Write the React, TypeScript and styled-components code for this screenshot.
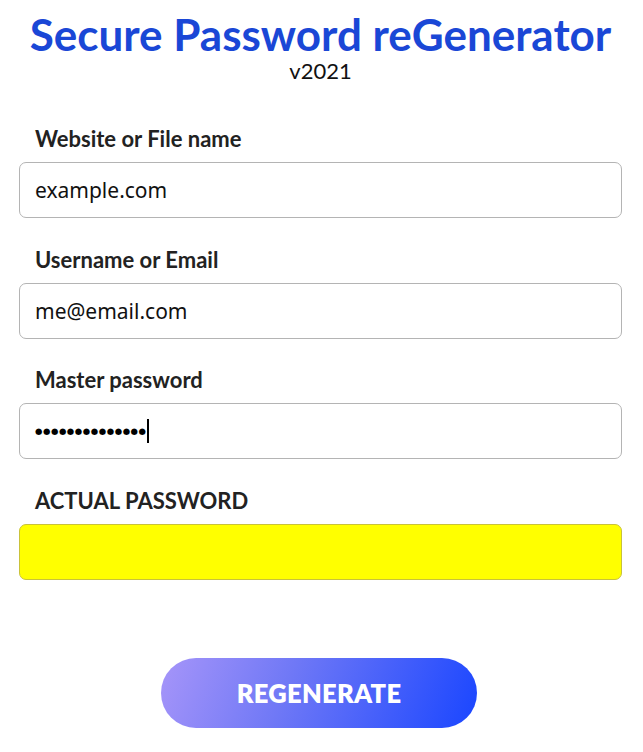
import React from "react";
import styled, { createGlobalStyle } from "styled-components";

const Global = createGlobalStyle`
  html, body { margin: 0; padding: 0; background: #fff; }
  body { font-family: Lato, "Noto Sans", sans-serif; color: #222; }
`;

const Page = styled.div`
  width: 643px;
  padding: 0 21px 0 19px;
  box-sizing: border-box;
  display: flex;
  flex-direction: column;
`;

const Header = styled.header`
  display: flex;
  flex-direction: column;
  align-items: center;
  padding-top: 12px;
`;

const Title = styled.h1`
  margin: 0;
  font-family: Lato, sans-serif;
  font-weight: 700;
  font-size: 44px;
  line-height: 44px;
  color: #1a47d6;
  white-space: nowrap;
`;

const Version = styled.div`
  font-family: Lato, sans-serif;
  font-size: 22px;
  line-height: 22px;
  margin-top: 4px;
  color: #111;
`;

const Form = styled.form`
  display: flex;
  flex-direction: column;
  margin-top: 44px;
`;

const Field = styled.div`
  display: flex;
  flex-direction: column;
  margin-bottom: 28.5px;
`;

const Label = styled.label`
  font-family: Lato, sans-serif;
  font-weight: 700;
  font-size: 22px;
  line-height: 26px;
  color: #222;
  padding-left: 16px;
  margin-bottom: 10px;
`;

const Input = styled.input<{ $highlight?: boolean }>`
  box-sizing: border-box;
  height: 56px;
  width: 100%;
  padding: 0 15px;
  border: 1px solid ${(p) => (p.$highlight ? "#c9c23a" : "#b4b4b4")};
  border-radius: 7px;
  background: ${(p) => (p.$highlight ? "#ffff00" : "#fff")};
  font-family: "Noto Sans", sans-serif;
  font-size: 21px;
  color: #111;
  outline: none;
`;

const FakeInput = styled.div`
  box-sizing: border-box;
  height: 56px;
  width: 100%;
  padding: 0 15px;
  border: 1px solid #b4b4b4;
  border-radius: 7px;
  background: #fff;
  display: flex;
  align-items: center;
`;

const Dots = styled.span`
  font-family: "DejaVu Sans", sans-serif;
  font-size: 8.5px;
  letter-spacing: 0.55px;
  color: #000;
`;

const Caret = styled.span`
  display: inline-block;
  width: 2px;
  height: 24px;
  background: #000;
  margin-left: 0;
`;

const ButtonRow = styled.div`
  display: flex;
  justify-content: center;
  margin-top: 49.5px;
  padding-right: 3px;
`;

const Button = styled.button`
  width: 316px;
  height: 70px;
  border: none;
  border-radius: 35px;
  background: linear-gradient(110deg, #a695f9 0%, #6f78f6 40%, #1a46ff 100%);
  color: #fff;
  font-family: Lato, sans-serif;
  font-weight: 800;
  font-size: 25.5px;
  letter-spacing: 0.3px;
  cursor: pointer;
`;

export default function App() {
  return (
    <Page>
      <Global />
      <Header>
        <Title>Secure Password reGenerator</Title>
        <Version>v2021</Version>
      </Header>
      <Form onSubmit={(e) => e.preventDefault()}>
        <Field>
          <Label htmlFor="site">Website or File name</Label>
          <Input id="site" defaultValue="example.com" />
        </Field>
        <Field>
          <Label htmlFor="user">Username or Email</Label>
          <Input id="user" defaultValue="me@email.com" />
        </Field>
        <Field>
          <Label>Master password</Label>
          <FakeInput>
            <Dots>{"●".repeat(14)}</Dots>
            <Caret />
          </FakeInput>
        </Field>
        <Field>
          <Label htmlFor="actual">ACTUAL PASSWORD</Label>
          <Input id="actual" $highlight readOnly defaultValue="" />
        </Field>
        <ButtonRow>
          <Button type="button">REGENERATE</Button>
        </ButtonRow>
      </Form>
    </Page>
  );
}
